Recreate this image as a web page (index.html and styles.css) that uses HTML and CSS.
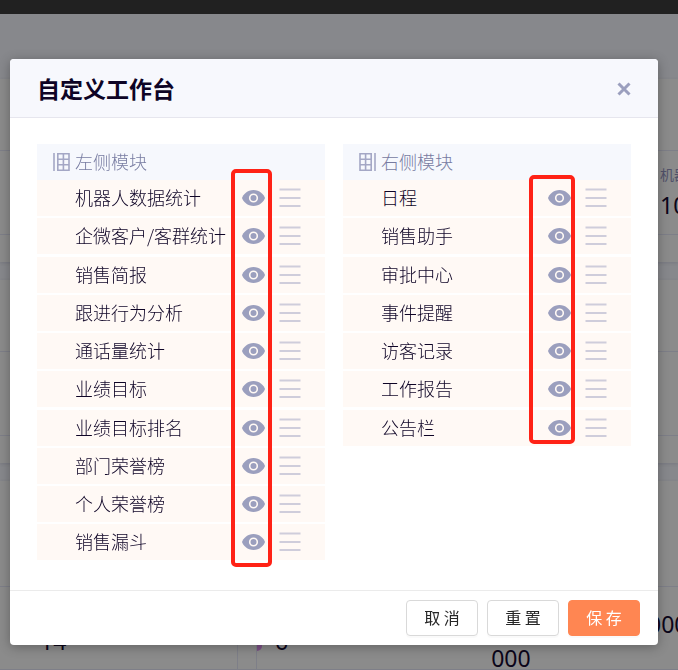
FILE: index.html
```html
<!DOCTYPE html>
<html lang="zh-CN">
<head>
<meta charset="utf-8">
<title>自定义工作台</title>
<link rel="stylesheet" href="styles.css">
</head>
<body>
<svg class="sprite" aria-hidden="true">
  <symbol id="eye" viewBox="0 0 23 16">
    <path fill="#9b9fbe" d="M0 8C1 4.500 5.500 0 11.500 0S22 4.500 23 8C22 11.500 17.500 16 11.500 16S1 11.500 0 8Z"/>
    <circle cx="11.500" cy="8" r="3.800" fill="#9b9fbe" stroke="#fff9f5" stroke-width="1.600"/>
  </symbol>
  <symbol id="drag" viewBox="0 0 22 20">
    <path d="M.5 1.500h21M.5 10h21M.5 18h21" stroke="#cfcddb" stroke-width="2"/>
  </symbol>
  <symbol id="grid" viewBox="0 0 17 18">
    <path d="M1 0v18M4.800 .8h11.200v16.400H4.800zM10.400 1v16M4.800 6.300h11.200M4.800 11.700h11.200" fill="none" stroke="#a4a7c5" stroke-width="1.600"/>
  </symbol>
</svg>

<div class="page">
  <div class="topbar"></div>
  <section class="panel panel-first">
    <div class="panel-head"></div>
    <div class="panel-body">
      <div class="metric"><span class="metric-label">机器</span><span class="figure">10</span></div>
    </div>
    <div class="panel-foot"></div>
  </section>
  <section class="panel">
    <div class="panel-head"></div>
    <div class="panel-body"></div>
    <div class="panel-foot"></div>
  </section>
  <section class="panel panel-last">
    <div class="panel-head tall"></div>
    <div class="cards">
      <div class="card"><span class="figure">14</span></div>
      <div class="card card-wide">
        <i class="dot"></i>
        <span class="figure">6</span>
        <div class="amount figure"><span class="amount-top">000</span><span class="amount-rest">000</span></div>
      </div>
    </div>
  </section>
</div>

<div class="overlay">
<div class="modal" role="dialog" aria-labelledby="title">
  <header class="modal-head">
    <h1 id="title">自定义工作台</h1>
    <button class="close" type="button" aria-label="关闭">
      <svg width="14" height="14" viewBox="0 0 14 14"><path d="M1.500 1.500l11 11M12.500 1.500l-11 11" stroke="#9b9fbe" stroke-width="3"/></svg>
    </button>
  </header>
  <div class="modal-body">
    <section class="column">
      <h2><svg class="grid-icon"><use href="#grid"/></svg><span class="name">左侧模块</span></h2>
      <ul>
        <li><span class="name">机器人数据统计</span><button type="button" class="icon-button" aria-label="显示"><svg class="eye"><use href="#eye"/></svg></button><svg class="drag"><use href="#drag"/></svg></li>
        <li><span class="name">企微客户/客群统计</span><button type="button" class="icon-button" aria-label="显示"><svg class="eye"><use href="#eye"/></svg></button><svg class="drag"><use href="#drag"/></svg></li>
        <li><span class="name">销售简报</span><button type="button" class="icon-button" aria-label="显示"><svg class="eye"><use href="#eye"/></svg></button><svg class="drag"><use href="#drag"/></svg></li>
        <li><span class="name">跟进行为分析</span><button type="button" class="icon-button" aria-label="显示"><svg class="eye"><use href="#eye"/></svg></button><svg class="drag"><use href="#drag"/></svg></li>
        <li><span class="name">通话量统计</span><button type="button" class="icon-button" aria-label="显示"><svg class="eye"><use href="#eye"/></svg></button><svg class="drag"><use href="#drag"/></svg></li>
        <li><span class="name">业绩目标</span><button type="button" class="icon-button" aria-label="显示"><svg class="eye"><use href="#eye"/></svg></button><svg class="drag"><use href="#drag"/></svg></li>
        <li><span class="name">业绩目标排名</span><button type="button" class="icon-button" aria-label="显示"><svg class="eye"><use href="#eye"/></svg></button><svg class="drag"><use href="#drag"/></svg></li>
        <li><span class="name">部门荣誉榜</span><button type="button" class="icon-button" aria-label="显示"><svg class="eye"><use href="#eye"/></svg></button><svg class="drag"><use href="#drag"/></svg></li>
        <li><span class="name">个人荣誉榜</span><button type="button" class="icon-button" aria-label="显示"><svg class="eye"><use href="#eye"/></svg></button><svg class="drag"><use href="#drag"/></svg></li>
        <li><span class="name">销售漏斗</span><button type="button" class="icon-button" aria-label="显示"><svg class="eye"><use href="#eye"/></svg></button><svg class="drag"><use href="#drag"/></svg></li>
      </ul>
      <div class="mark mark-left"></div>
    </section>
    <section class="column">
      <h2><svg class="grid-icon flipped"><use href="#grid"/></svg><span class="name">右侧模块</span></h2>
      <ul>
        <li><span class="name">日程</span><button type="button" class="icon-button" aria-label="显示"><svg class="eye"><use href="#eye"/></svg></button><svg class="drag"><use href="#drag"/></svg></li>
        <li><span class="name">销售助手</span><button type="button" class="icon-button" aria-label="显示"><svg class="eye"><use href="#eye"/></svg></button><svg class="drag"><use href="#drag"/></svg></li>
        <li><span class="name">审批中心</span><button type="button" class="icon-button" aria-label="显示"><svg class="eye"><use href="#eye"/></svg></button><svg class="drag"><use href="#drag"/></svg></li>
        <li><span class="name">事件提醒</span><button type="button" class="icon-button" aria-label="显示"><svg class="eye"><use href="#eye"/></svg></button><svg class="drag"><use href="#drag"/></svg></li>
        <li><span class="name">访客记录</span><button type="button" class="icon-button" aria-label="显示"><svg class="eye"><use href="#eye"/></svg></button><svg class="drag"><use href="#drag"/></svg></li>
        <li><span class="name">工作报告</span><button type="button" class="icon-button" aria-label="显示"><svg class="eye"><use href="#eye"/></svg></button><svg class="drag"><use href="#drag"/></svg></li>
        <li><span class="name">公告栏</span><button type="button" class="icon-button" aria-label="显示"><svg class="eye"><use href="#eye"/></svg></button><svg class="drag"><use href="#drag"/></svg></li>
      </ul>
      <div class="mark mark-right"></div>
    </section>
  </div>
  <footer class="modal-foot">
    <button type="button" class="btn">取 消</button>
    <button type="button" class="btn">重 置</button>
    <button type="button" class="btn primary">保 存</button>
  </footer>
</div>
</div>
</body>
</html>
```
FILE: styles.css
```css
* { box-sizing: border-box; }
body {
  margin: 0;
  background: #87888c;
  font-family: "Noto Sans CJK SC", sans-serif;
  color: #0e0426;
  overflow: hidden;
}
h1, h2, ul { margin: 0; padding: 0; }
ul { list-style: none; }
button { font: inherit; cursor: pointer; }
.sprite { display: none; }

/* Dimmed workbench behind the dialog */
.page { height: 100vh; overflow: hidden; }
.topbar { height: 14px; background: #212121; }
.panel {
  margin-bottom: 18px;
  background: #8b8b8b;
  box-shadow: 0 1px 3px rgba(60, 60, 80, .2);
}
.panel-first { margin-top: 65px; }
.panel-last { margin-bottom: 0; }
.panel-head { height: 72px; border-bottom: 1px solid #7e7f88; }
.panel-head.tall { height: 106px; }
.panel-body { height: 84px; border-bottom: 1px solid #7e7f88; }
.panel-foot { height: 27px; }
.metric {
  width: 18px;
  margin-left: auto;
  padding-top: 12px;
  white-space: nowrap;
}
.metric-label { display: block; font-size: 14px; line-height: 22px; color: #51526a; }
.figure {
  font-family: "Noto Sans", sans-serif;
  font-size: 23px;
  line-height: 34px;
  color: #0b0519;
}
.metric .figure { display: block; line-height: 40px; }
.cards { display: flex; gap: 18px; height: 83px; border-bottom: 1px solid #7e7f88; }
.card { width: 238px; padding: 37px 40px 0; border-right: 1px solid #7e7f88; }
.card-wide {
  display: flex;
  align-items: flex-start;
  flex: 1;
  padding: 37px 0 0;
  border-left: 1px solid #7e7f88;
  border-right: 0;
}
.dot { width: 5px; height: 27px; margin-right: 13px; border-radius: 0 5px 5px 0; background: #7d5186; }
.amount {
  display: flex;
  flex: 1;
  flex-direction: column;
  margin-top: -17px;
  margin-left: 203px;
}
.amount-top { width: 30px; margin-left: auto; }

/* Dialog */
.overlay { position: fixed; inset: 0; padding: 59px 20px 0 10px; }
.modal { background: #fff; border-radius: 4px; box-shadow: 0 2px 12px rgba(0, 0, 0, .3); }
.modal-head {
  display: flex;
  align-items: center;
  justify-content: space-between;
  height: 59px;
  padding: 0 27px;
  background: #f7f8fd;
  border-bottom: 1px solid #e6e6ee;
  border-radius: 4px 4px 0 0;
}
.modal-head h1 { font-size: 23px; line-height: 32px; font-weight: 700; }
.close { display: flex; padding: 2px 0 0; border: 0; background: none; }
.modal-body {
  display: grid;
  grid-template-columns: 1fr 1fr;
  align-items: start;
  gap: 18px;
  padding: 26px 27px 30px;
}
.column { position: relative; }
.column h2 {
  display: flex;
  align-items: center;
  gap: 5px;
  height: 36px;
  padding-left: 16px;
  background: #f6f8fd;
  color: #777ba1;
  font-size: 18px;
  font-weight: 300;
}
.grid-icon { width: 17px; height: 18px; }
.flipped { transform: scaleX(-1); }
.column li {
  display: flex;
  align-items: center;
  height: 36px;
  padding: 0 24px 0 38px;
  background: #fff9f5;
  font-size: 18px;
  font-weight: 300;
}
.column li + li { margin-top: 2px; }
.column li:nth-child(4n + 3) { margin-top: 3px; }
.name { flex: 1; padding-bottom: 2px; white-space: nowrap; }
.icon-button { display: flex; padding: 0; border: 0; background: none; }
.eye { width: 23px; height: 16px; }
.drag { width: 22px; height: 20px; margin-left: 14px; }
.mark { position: absolute; border: 4px solid #ff2216; border-radius: 5px; pointer-events: none; }
.mark-left { top: 25px; bottom: -7px; left: 194px; width: 41px; }
.mark-right { top: 31px; bottom: 2px; left: 186px; width: 46px; }
.modal-foot {
  display: flex;
  justify-content: flex-end;
  gap: 9px;
  padding: 9px 18px;
  border-top: 1px solid #ebebeb;
}
.btn {
  min-width: 72px;
  height: 36px;
  padding: 0 16px 2px;
  border: 1px solid #d9d9d9;
  border-radius: 4px;
  background: #fff;
  box-shadow: 0 2px 0 rgba(0, 0, 0, .02);
  color: #262626;
  font-size: 16px;
}
.primary { border-color: #ff8652; background: #ff8652; color: #fff; }
```
